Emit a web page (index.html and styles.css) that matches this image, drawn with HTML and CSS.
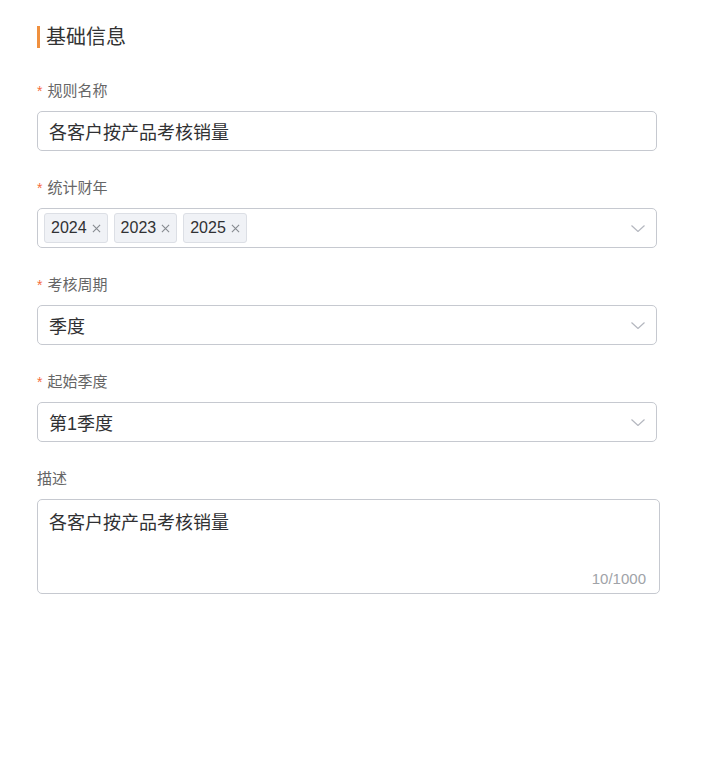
FILE: index.html
```html
<!DOCTYPE html>
<html lang="zh-CN">

<head>
	<meta charset="UTF-8">
	<meta name="viewport" content="width=device-width, initial-scale=1.0">
	<title>基础信息</title>
	<link rel="stylesheet" href="styles.css">
</head>

<body>
	<section class="page">
		<h2 class="title">基础信息</h2>

		<div class="item">
			<label class="label"><i>*</i>规则名称</label>
			<div class="control">各客户按产品考核销量</div>
		</div>

		<div class="item">
			<label class="label"><i>*</i>统计财年</label>
			<div class="control select tags">
				<span class="tag">2024<svg viewBox="0 0 10 10"><path d="M1 1L9 9M9 1L1 9" /></svg></span>
				<span class="tag">2023<svg viewBox="0 0 10 10"><path d="M1 1L9 9M9 1L1 9" /></svg></span>
				<span class="tag">2025<svg viewBox="0 0 10 10"><path d="M1 1L9 9M9 1L1 9" /></svg></span>
				<svg class="arrow" viewBox="0 0 14 7"><path d="M0.5 0.5L7 6.5L13.5 0.5" /></svg>
			</div>
		</div>

		<div class="item">
			<label class="label"><i>*</i>考核周期</label>
			<div class="control select">
				<span>季度</span>
				<svg class="arrow" viewBox="0 0 14 7"><path d="M0.5 0.5L7 6.5L13.5 0.5" /></svg>
			</div>
		</div>

		<div class="item">
			<label class="label"><i>*</i>起始季度</label>
			<div class="control select">
				<span>第1季度</span>
				<svg class="arrow" viewBox="0 0 14 7"><path d="M0.5 0.5L7 6.5L13.5 0.5" /></svg>
			</div>
		</div>

		<div class="item">
			<label class="label">描述</label>
			<div class="control area">
				<span>各客户按产品考核销量</span>
				<span class="count">10/1000</span>
			</div>
		</div>
	</section>
</body>

</html>
```

FILE: styles.css
```css
* {
	margin: 0;
	padding: 0;
	box-sizing: border-box;
}

html,
body {
	width: 100%;
	height: 100%;
	background: #fff;
}

body {
	font-family: "Liberation Sans", "Noto Sans CJK SC", sans-serif;
	color: #303133;
}

.page {
	padding: 26px 0 0 37px;
}

.title {
	height: 22px;
	line-height: 22px;
	margin-bottom: 33px;
	padding-left: 6px;
	border-left: 3px solid #f0903e;
	font-size: 20px;
	font-weight: normal;
	color: #333;
}

.item {
	margin-bottom: 27px;
}

.label {
	display: block;
	height: 20px;
	line-height: 20px;
	margin-bottom: 10px;
	font-size: 15px;
	color: #666;
}

.label i {
	font-style: normal;
	color: #f56c3c;
	margin-right: 5px;
	font-size: 14px;
}

.control {
	display: flex;
	align-items: center;
	width: 620px;
	height: 40px;
	padding: 0 11px;
	border: 1px solid #c6c9d0;
	border-radius: 5px;
	font-size: 18px;
	color: #303133;
}

.select {
	position: relative;
}

.tags {
	padding-left: 6px;
	gap: 6px;
}

.tag {
	display: flex;
	align-items: center;
	height: 30px;
	padding: 0 6px;
	background: #f0f2f6;
	border: 1px solid #dcdfe5;
	border-radius: 3px;
	font-size: 16px;
	color: #303133;
}

.tag svg {
	width: 9px;
	height: 9px;
	margin-left: 5px;
	fill: none;
	stroke: #85898f;
	stroke-width: 1.2;
}

.arrow {
	position: absolute;
	right: 11px;
	top: 16px;
	width: 14px;
	height: 7px;
	fill: none;
	stroke: #b4b7bf;
	stroke-width: 1.2;
}

.area {
	position: relative;
	align-items: flex-start;
	width: 623px;
	height: 95px;
	padding-top: 8px;
}

.count {
	position: absolute;
	right: 13px;
	bottom: 6px;
	font-size: 15px;
	color: #a0a3a8;
}
```
